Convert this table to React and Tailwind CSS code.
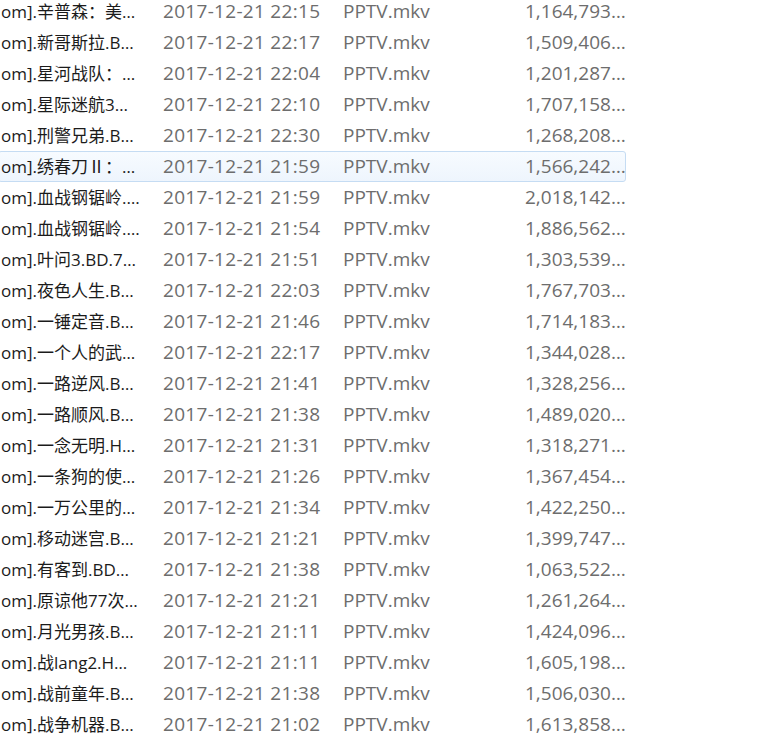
import React from 'react';

const rows = [
  ['om].辛普森：美…', '2017-12-21 22:15', '1,164,793…'],
  ['om].新哥斯拉.B…', '2017-12-21 22:17', '1,509,406…'],
  ['om].星河战队：…', '2017-12-21 22:04', '1,201,287…'],
  ['om].星际迷航3…', '2017-12-21 22:10', '1,707,158…'],
  ['om].刑警兄弟.B…', '2017-12-21 22:30', '1,268,208…'],
  ['om].绣春刀Ⅱ：…', '2017-12-21 21:59', '1,566,242…', true],
  ['om].血战钢锯岭.…', '2017-12-21 21:59', '2,018,142…'],
  ['om].血战钢锯岭.…', '2017-12-21 21:54', '1,886,562…'],
  ['om].叶问3.BD.7…', '2017-12-21 21:51', '1,303,539…'],
  ['om].夜色人生.B…', '2017-12-21 22:03', '1,767,703…'],
  ['om].一锤定音.B…', '2017-12-21 21:46', '1,714,183…'],
  ['om].一个人的武…', '2017-12-21 22:17', '1,344,028…'],
  ['om].一路逆风.B…', '2017-12-21 21:41', '1,328,256…'],
  ['om].一路顺风.B…', '2017-12-21 21:38', '1,489,020…'],
  ['om].一念无明.H…', '2017-12-21 21:31', '1,318,271…'],
  ['om].一条狗的使…', '2017-12-21 21:26', '1,367,454…'],
  ['om].一万公里的…', '2017-12-21 21:34', '1,422,250…'],
  ['om].移动迷宫.B…', '2017-12-21 21:21', '1,399,747…'],
  ['om].有客到.BD…', '2017-12-21 21:38', '1,063,522…'],
  ['om].原谅他77次…', '2017-12-21 21:21', '1,261,264…'],
  ['om].月光男孩.B…', '2017-12-21 21:11', '1,424,096…'],
  ['om].战lang2.H…', '2017-12-21 21:11', '1,605,198…'],
  ['om].战前童年.B…', '2017-12-21 21:38', '1,506,030…'],
  ['om].战争机器.B…', '2017-12-21 21:02', '1,613,858…'],
];

const Row = ({ name, date, size, selected }) => (
  <div
    className={
      'flex items-center h-[31px] w-[628px] -ml-[2px] pl-[2px] rounded-[3px] border ' +
      (selected
        ? 'border-[#c5dcf3] bg-gradient-to-b from-[#f7fbff] to-[#eef5fd]'
        : 'border-transparent')
    }
  >
    <div className="w-[162px] whitespace-nowrap text-[17px] text-[#1b1b1b]">{name}</div>
    <div className="w-[180px] whitespace-nowrap tracking-[0.3px] text-[#6d6d6d]">{date}</div>
    <div className="w-[182px] whitespace-nowrap text-[#6d6d6d]">PPTV.mkv</div>
    <div className="w-[97px] whitespace-nowrap text-right text-[#6d6d6d]">{size}</div>
  </div>
);

const App = () => {
  return (
    <div
      className="w-[758px] h-[739px] overflow-hidden bg-white text-[19px] leading-none"
      style={{ fontFamily: '"Open Sans", "Noto Sans CJK SC", sans-serif' }}
    >
      <div className="-mt-[4px]">
        {rows.map((r, i) => (
          <Row key={i} name={r[0]} date={r[1]} size={r[2]} selected={r[3]} />
        ))}
      </div>
    </div>
  );
};

export default App;
